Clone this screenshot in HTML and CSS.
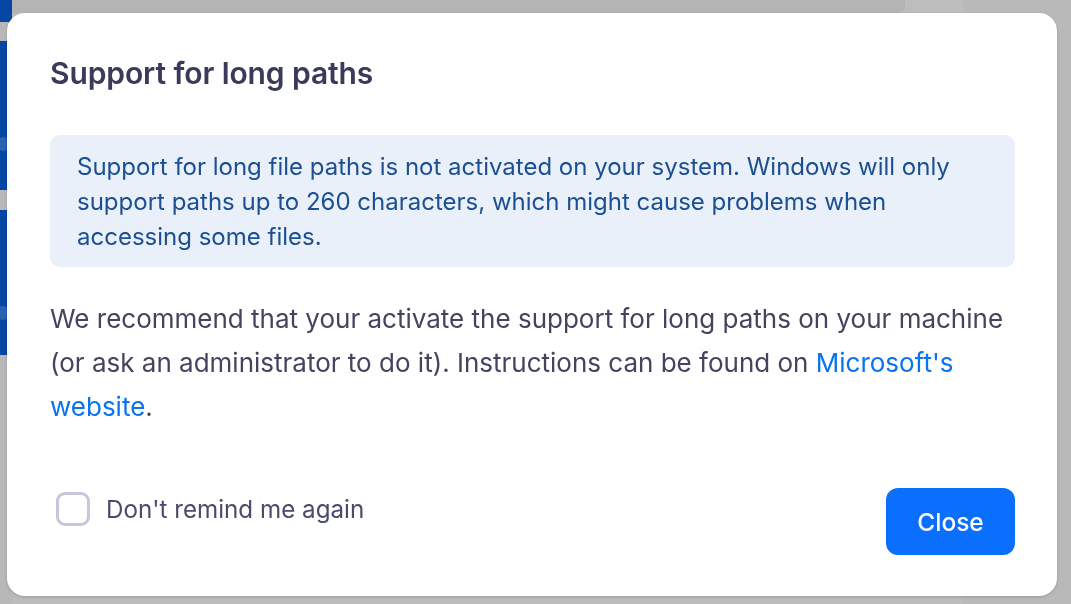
FILE: index.html
```html
<!DOCTYPE html>
<html lang="en">
<head>
  <meta charset="UTF-8">
  <title>Support for long paths</title>
  <link rel="stylesheet" href="styles.css">
</head>
<body>

<div class="app">
  <div class="sidebar">
    <div class="tile tile-top"></div>
    <div class="tile tile-a"><span class="wave"></span></div>
    <div class="tile tile-b"><span class="wave"></span></div>
  </div>
  <div class="main">
    <div class="topbar">
      <div class="tab"></div>
      <div class="tab-light"></div>
    </div>
    <div class="content">
      <div class="content-left"></div>
      <div class="content-right"></div>
    </div>
  </div>
</div>

<div class="overlay">
  <div class="dialog">
    <h1>Support for long paths</h1>
    <div class="notice">
      Support for long file paths is not activated on your system. Windows will only<br>
      support paths up to 260 characters, which might cause problems when<br>
      accessing some files.
    </div>
    <p class="text">
      We recommend that your activate the support for long paths on your machine
      (or ask an administrator to do it). Instructions can be found on <a href="#">Microsoft's website</a>.
    </p>
    <div class="footer">
      <label class="check">
        <span class="box"></span>
        Don't remind me again
      </label>
      <button class="btn-close">Close</button>
    </div>
  </div>
</div>

</body>
</html>
```

FILE: styles.css
```css
* { box-sizing: border-box; }
html, body { margin: 0; padding: 0; height: 100%; }
body { background: #b8b8b9; font-family: Inter, "Noto Sans", sans-serif; overflow: hidden; }

/* app behind the dimmed overlay */
.app { display: flex; height: 604px; }
.sidebar { width: 12px; display: flex; flex-direction: column; }
.tile { background: #0447a4; position: relative; overflow: hidden; }
.tile-top { height: 22px; }
.tile-a { height: 149px; margin-top: 19px; width: 8px; }
.tile-b { height: 145px; margin-top: 20px; width: 8px; }
.wave { position: absolute; left: -4px; top: 96px; width: 14px; height: 14px; border-radius: 50%; background: rgba(255,255,255,0.15); }

.main { flex: 1; display: flex; flex-direction: column; }
.topbar { height: 13px; display: flex; background: #b9b9ba; }
.tab { width: 893px; background: #b4b4b5; border-bottom-right-radius: 8px; }
.tab-light { width: 58px; background: #bdbdbd; }
.content { flex: 1; display: flex; }
.content-left { width: 951px; background: #bcbcbc; }
.content-right { flex: 1; background: #b9b9b9; }

/* dialog */
.overlay { position: fixed; inset: 0; padding: 13px 14px 8px 7px; display: flex; }
.dialog {
  width: 1050px; height: 583px; background: #fff; border-radius: 18px;
  padding: 45px 42px 41px 43px; display: flex; flex-direction: column;
  box-shadow: 0 1px 3px rgba(0,0,0,0.18);
}
.dialog h1 { margin: 0; font-size: 30px; font-weight: 600; color: #3a3a5a; line-height: 30px; letter-spacing: -0.1px; }

.notice {
  margin-top: 47px; background: #e9f0f9; border-radius: 10px;
  padding: 14px 28px 13px 27px; color: #1b4f92; font-size: 24px; line-height: 35px;
  white-space: nowrap;
}

.text { margin: 30px 0 0 0; color: #44445f; font-size: 26px; line-height: 44px; }
.text a { color: #0a73f2; text-decoration: none; }

.footer { margin-top: auto; display: flex; align-items: flex-end; justify-content: space-between; }
.check { display: flex; align-items: center; gap: 16px; color: #4a4a6c; font-size: 24.2px; margin: 0 0 29px 6px; }
.box { width: 34px; height: 34px; border: 3px solid #c6c6dc; border-radius: 9px; }
.btn-close {
  width: 129px; height: 67px; border: none; border-radius: 12px; background: #0a6ffc;
  color: #fff; font-family: inherit; font-size: 24.5px; font-weight: 500; cursor: pointer;
}
```
